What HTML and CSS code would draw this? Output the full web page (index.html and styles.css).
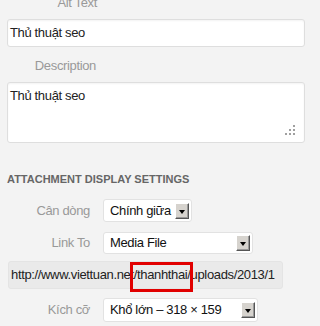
FILE: index.html
```html
<!DOCTYPE html>
<html>
<head>
<meta charset="utf-8">
<link rel="stylesheet" href="styles.css">
</head>
<body>
<div class="panel">
  <div class="lbl lbl-alt">Alt Text</div>
  <div class="input">Thủ thuật seo</div>
  <div class="lbl lbl-desc">Description</div>
  <div class="textarea">Thủ thuật seo
    <svg class="grip" width="11" height="11" viewBox="0 0 11 11">
      <rect x="8" y="0" width="2" height="2" fill="#a0a0a0"/>
      <rect x="4" y="4" width="2" height="2" fill="#a0a0a0"/>
      <rect x="8" y="4" width="2" height="2" fill="#a0a0a0"/>
      <rect x="0" y="8" width="2" height="2" fill="#a0a0a0"/>
      <rect x="4" y="8" width="2" height="2" fill="#a0a0a0"/>
      <rect x="8" y="8" width="2" height="2" fill="#a0a0a0"/>
    </svg>
  </div>
  <h3 class="heading">Attachment Display Settings</h3>
  <div class="row row-align">
    <span class="name">Cân dòng</span>
    <div class="sel sel-align">Chính giữa<span class="arrow"></span></div>
  </div>
  <div class="row row-link">
    <span class="name">Link To</span>
    <div class="sel sel-link">Media File<span class="arrow"></span></div>
  </div>
  <div class="url">http://www.viettuan.net/thanhthai/uploads/2013/1<span class="highlight"></span></div>
  <div class="row row-size">
    <span class="name">Kích cỡ</span>
    <div class="sel sel-size">Khổ lớn – 318 × 159<span class="arrow"></span></div>
  </div>
</div>
</body>
</html>
```
FILE: styles.css
```css
html, body {
  margin: 0;
  padding: 0;
  background: #f3f3f3;
  overflow: hidden;
}
.panel {
  font-family: "Liberation Sans", Arial, sans-serif;
  font-size: 13px;
  letter-spacing: -0.35px;
  line-height: 16px;
  color: #222;
  width: 318px;
}
.lbl {
  width: 97px;
  text-align: right;
  color: #999;
}
.lbl-alt {
  margin-top: -5px;
  margin-bottom: 8px;
}
.lbl-desc {
  width: 96px;
  margin-top: 11px;
  margin-bottom: 8px;
}
.input, .textarea {
  margin-left: 7px;
  width: 298px;
  box-sizing: border-box;
  background: #fff;
  border: 1px solid #dedede;
  border-radius: 3px;
  box-shadow: inset 0 1px 2px rgba(0,0,0,0.05);
  padding: 5px 2px;
}
.input {
  height: 28px;
}
.textarea {
  height: 61px;
  position: relative;
}
.grip {
  position: absolute;
  right: 8px;
  bottom: 6px;
}
.heading {
  margin: 28px 0 0 7px;
  font-size: 11px;
  font-weight: bold;
  letter-spacing: 0;
  line-height: 16px;
  color: #666;
  text-transform: uppercase;
}
.row {
  display: grid;
  grid-template-columns: 90px auto;
  column-gap: 13px;
  align-items: center;
}
.name {
  text-align: right;
  color: #999;
}
.row-align { margin-top: 12px; }
.row-link { margin-top: 10px; }
.row-size { margin-top: 9px; }
.sel {
  box-sizing: border-box;
  height: 23px;
  background: #fff;
  border: 1px solid #e2e2e2;
  border-radius: 3px;
  padding: 3px 0 0 6px;
  position: relative;
  color: #111;
}
.sel-align { width: 89px; }
.sel-link { width: 150px; height: 22px; padding-top: 2px; }
.sel-size { width: 155px; height: 24px; padding-top: 3px; }
.arrow {
  position: absolute;
  right: 2px;
  top: 50%;
  margin-top: -8px;
  width: 14px;
  height: 16px;
  box-sizing: border-box;
  background: #d6d3ce;
  border-top: 1px solid #fff;
  border-left: 1px solid #fff;
  border-right: 1px solid #555;
  border-bottom: 1px solid #555;
  box-shadow: inset -1px -1px 0 #999;
}
.arrow::after {
  content: "";
  position: absolute;
  left: 3px;
  top: 6px;
  border-left: 3.5px solid transparent;
  border-right: 3.5px solid transparent;
  border-top: 4px solid #000;
}
.url {
  position: relative;
  margin: 7px 0 0 8px;
  width: 275px;
  height: 28px;
  box-sizing: border-box;
  background: #eaeaea;
  border: 1px solid #e4e4e4;
  border-radius: 3px;
  padding: 5px 0 0 2px;
  color: #222;
  white-space: nowrap;
  overflow: visible;
}
.highlight {
  position: absolute;
  left: 121px;
  top: 0px;
  width: 63px;
  height: 30px;
  box-sizing: border-box;
  border: 3px solid #e10000;
}
```
